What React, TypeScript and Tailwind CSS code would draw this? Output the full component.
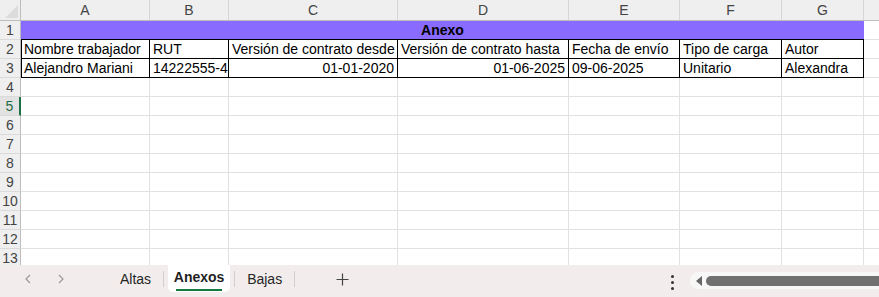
import React from "react";

const cols = [
  { l: "A", w: 129 },
  { l: "B", w: 79 },
  { l: "C", w: 169 },
  { l: "D", w: 171 },
  { l: "E", w: 111 },
  { l: "F", w: 102 },
  { l: "G", w: 82 },
];

const headers = [
  "Nombre trabajador",
  "RUT",
  "Versión de contrato desde",
  "Versión de contrato hasta",
  "Fecha de envío",
  "Tipo de carga",
  "Autor",
];
const data = [
  { t: "Alejandro Mariani", r: false },
  { t: "14222555-4", r: false },
  { t: "01-01-2020", r: true },
  { t: "01-06-2025", r: true },
  { t: "09-06-2025", r: false },
  { t: "Unitario", r: false },
  { t: "Alexandra", r: false },
];

const font = { fontFamily: '"Liberation Sans", Arial, sans-serif' };

function RowHead({ n, sel }: { n: number; sel?: boolean }) {
  return (
    <div
      className={
        "w-[21px] h-[19px] shrink-0 flex items-center justify-center text-[14px] border-b border-[#dadada] " +
        (sel
          ? "bg-[#e2e2e2] text-[#1d6b43] border-r-2 border-r-[#1e7145]"
          : "bg-[#efefef] text-[#444] border-r border-r-[#bdbdbd]")
      }
    >
      {n}
    </div>
  );
}

function EmptyRow({ n, sel }: { n: number; sel?: boolean }) {
  return (
    <div className="flex h-[19px]">
      <RowHead n={n} sel={sel} />
      {cols.map((c) => (
        <div
          key={c.l}
          style={{ width: c.w }}
          className="shrink-0 h-[19px] border-r border-b border-[#e1e1e1] bg-white"
        />
      ))}
      <div className="flex-1 h-[19px] border-b border-[#e1e1e1] bg-white" />
    </div>
  );
}

function DataRow({ n, cells }: { n: number; cells: { t: string; r: boolean }[] }) {
  return (
    <div className="flex h-[19px]">
      <RowHead n={n} />
      {cols.map((c, i) => (
        <div
          key={c.l}
          style={{ width: c.w }}
          className={
            "shrink-0 h-[19px] border-r border-b border-black bg-white text-[14px] text-black leading-[19px] px-[3px] whitespace-nowrap overflow-hidden " +
            (cells[i].r ? "text-right " : "") +
            (i === 0 ? "shadow-[inset_1px_0_0_#000]" : "")
          }
        >
          {cells[i].t}
        </div>
      ))}
      <div className="flex-1 h-[19px] border-b border-[#e1e1e1] bg-white" />
    </div>
  );
}

export default function App() {
  return (
    <div className="w-[879px] h-[297px] bg-white overflow-hidden flex flex-col select-none" style={font}>
      <div className="h-[265px] overflow-hidden">
        {/* column header */}
        <div className="flex h-[21px] bg-[#efefef] border-b border-[#bdbdbd]">
          <div className="w-[21px] shrink-0 relative border-r border-[#bdbdbd]">
            <div className="absolute right-[2px] bottom-[2px] w-0 h-0 border-l-[13px] border-l-transparent border-b-[13px] border-b-[#dcdcdc]" />
          </div>
          {cols.map((c) => (
            <div
              key={c.l}
              style={{ width: c.w }}
              className="shrink-0 flex items-center justify-center text-[14px] text-[#444] border-r border-[#d6d6d6]"
            >
              {c.l}
            </div>
          ))}
          <div className="flex-1" />
        </div>
        {/* row 1 */}
        <div className="flex h-[19px]">
          <RowHead n={1} />
          <div className="w-[843px] shrink-0 h-[19px] bg-[#8a6bff] border-b border-black flex items-center justify-center text-[14px] font-bold text-black leading-[18px]">
            Anexo
          </div>
          <div className="flex-1 h-[19px] border-b border-[#e1e1e1] bg-white" />
        </div>
        <DataRow n={2} cells={headers.map((t) => ({ t, r: false }))} />
        <DataRow n={3} cells={data} />
        <EmptyRow n={4} />
        <EmptyRow n={5} sel />
        {[6, 7, 8, 9, 10, 11, 12, 13].map((n) => (
          <EmptyRow key={n} n={n} />
        ))}
      </div>
      {/* sheet tab bar */}
      <div className="h-[32px] bg-[#f2edec] flex items-start relative">
        <div className="flex items-center h-[28px] pl-[22px] gap-[21px] text-[#9a9a9a]">
          <svg width="12" height="12" viewBox="0 0 12 12" fill="none" stroke="currentColor" strokeWidth="1.2">
            <path d="M8 2 L4 6 L8 10" />
          </svg>
          <svg width="12" height="12" viewBox="0 0 12 12" fill="none" stroke="currentColor" strokeWidth="1.2">
            <path d="M4 2 L8 6 L4 10" />
          </svg>
        </div>
        <div className="flex items-start ml-[45px] text-[14px] text-[#262626]">
          <div className="h-[28px] flex items-center pl-[8px] pr-[12px]">Altas</div>
          <div className="w-px h-[16px] bg-[#cfcfcf] mt-[6px]" />
          <div className="h-[27px] w-[62px] bg-white rounded-b-[5px] flex flex-col items-center justify-center ml-[4px]">
            <span className="text-[14px] font-bold text-[#1f1f1f] leading-[16px] mt-[3px]">Anexos</span>
            <div className="w-[46px] h-[2px] bg-[#107c41] mt-[4px]" />
          </div>
          <div className="w-px h-[16px] bg-[#cfcfcf] mt-[6px] ml-[4px]" />
          <div className="h-[28px] flex items-center pl-[12px] pr-[12px]">Bajas</div>
          <div className="w-px h-[16px] bg-[#cfcfcf] mt-[6px]" />
          <div className="h-[28px] flex items-center ml-[41px]">
            <svg width="13" height="13" viewBox="0 0 13 13" stroke="#444" strokeWidth="1.2">
              <path d="M6.5 0.5 V12.5 M0.5 6.5 H12.5" />
            </svg>
          </div>
        </div>
        <div className="absolute left-[671px] top-[10px] flex flex-col gap-[3px]">
          <div className="w-[3px] h-[3px] bg-[#333] rounded-full" />
          <div className="w-[3px] h-[3px] bg-[#333] rounded-full" />
          <div className="w-[3px] h-[3px] bg-[#333] rounded-full" />
        </div>
        <div className="absolute left-[690px] top-[7px] w-[200px] h-[17px] bg-[#f7f7f7] rounded-l-full flex items-center pl-[6px]">
          <div className="w-0 h-0 border-t-[5px] border-t-transparent border-b-[5px] border-b-transparent border-r-[6px] border-r-[#666]" />
          <div className="ml-[4px] flex-1 h-[10px] bg-[#707070] rounded-l-full" />
        </div>
      </div>
    </div>
  );
}
